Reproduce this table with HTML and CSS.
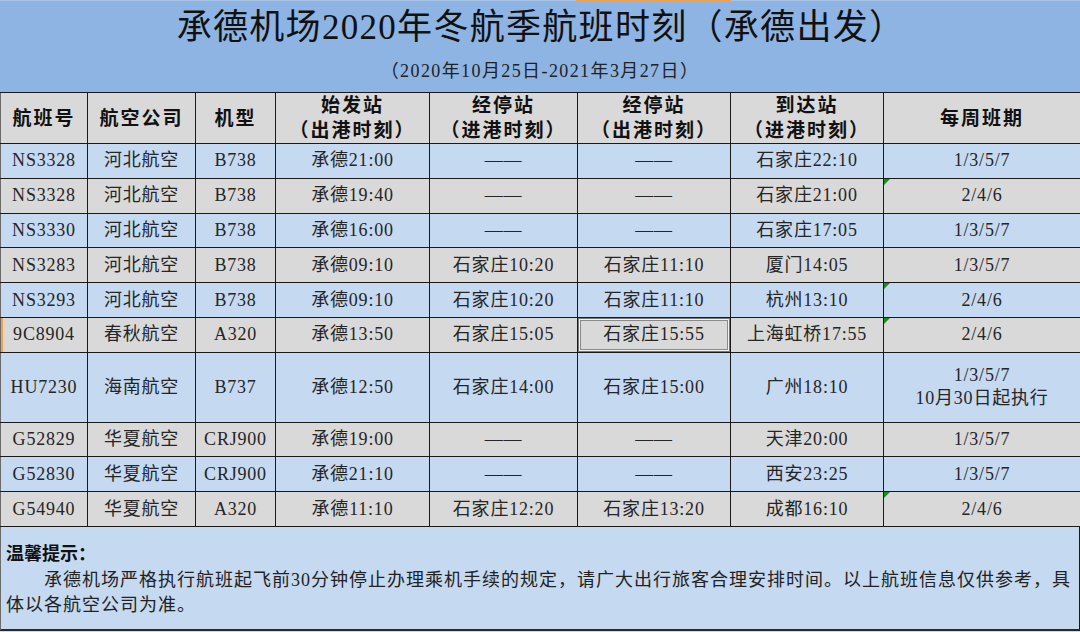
FILE: index.html
```html
<!DOCTYPE html>
<html lang="zh-CN">
<head>
<meta charset="utf-8">
<title>承德机场2020年冬航季航班时刻</title>
<link rel="stylesheet" href="styles.css">
</head>
<body>
<div class="sheet">
  <div class="banner">
    <div class="title">承德机场2020年冬航季航班时刻（承德出发）</div>
    <div class="subtitle">（2020年10月25日-2021年3月27日）</div>
  </div>
  <table class="grid">
    <colgroup>
      <col class="c1"><col class="c2"><col class="c3"><col class="c4"><col class="c5"><col class="c6"><col class="c7"><col class="c8">
    </colgroup>
    <thead>
      <tr class="head">
        <th>航班号</th><th>航空公司</th><th>机型</th>
        <th>始发站<br>（出港时刻）</th>
        <th>经停站<br>（进港时刻）</th>
        <th>经停站<br>（出港时刻）</th>
        <th>到达站<br>（进港时刻）</th>
        <th>每周班期</th>
      </tr>
    </thead>
    <tbody>
      <tr class="blue"><td>NS3328</td><td>河北航空</td><td>B738</td><td>承德21:00</td><td>——</td><td>——</td><td>石家庄22:10</td><td>1/3/5/7</td></tr>
      <tr class="grey"><td>NS3328</td><td>河北航空</td><td>B738</td><td>承德19:40</td><td>——</td><td>——</td><td>石家庄21:00</td><td class="flag">2/4/6</td></tr>
      <tr class="blue"><td>NS3330</td><td>河北航空</td><td>B738</td><td>承德16:00</td><td>——</td><td>——</td><td>石家庄17:05</td><td>1/3/5/7</td></tr>
      <tr class="grey"><td>NS3283</td><td>河北航空</td><td>B738</td><td>承德09:10</td><td>石家庄10:20</td><td>石家庄11:10</td><td>厦门14:05</td><td>1/3/5/7</td></tr>
      <tr class="blue"><td>NS3293</td><td>河北航空</td><td>B738</td><td>承德09:10</td><td>石家庄10:20</td><td>石家庄11:10</td><td>杭州13:10</td><td class="flag">2/4/6</td></tr>
      <tr class="grey active"><td class="rowmark">9C8904</td><td>春秋航空</td><td>A320</td><td>承德13:50</td><td>石家庄15:05</td><td class="sel">石家庄15:55</td><td>上海虹桥17:55</td><td class="flag">2/4/6</td></tr>
      <tr class="blue tall"><td>HU7230</td><td>海南航空</td><td>B737</td><td>承德12:50</td><td>石家庄14:00</td><td>石家庄15:00</td><td>广州18:10</td><td>1/3/5/7<br>10月30日起执行</td></tr>
      <tr class="grey"><td>G52829</td><td>华夏航空</td><td>CRJ900</td><td>承德19:00</td><td>——</td><td>——</td><td>天津20:00</td><td>1/3/5/7</td></tr>
      <tr class="blue"><td>G52830</td><td>华夏航空</td><td>CRJ900</td><td>承德21:10</td><td>——</td><td>——</td><td>西安23:25</td><td>1/3/5/7</td></tr>
      <tr class="grey"><td>G54940</td><td>华夏航空</td><td>A320</td><td>承德11:10</td><td>石家庄12:20</td><td>石家庄13:20</td><td>成都16:10</td><td class="flag">2/4/6</td></tr>
    </tbody>
  </table>
  <div class="note">
    <div class="note-title">温馨提示：</div>
    <p class="note-text"><span class="line indent">承德机场严格执行航班起飞前30分钟停止办理乘机手续的规定，请广大出行旅客合理安排时间。以上航班信息仅供参考，具</span><span class="line">体以各航空公司为准。</span></p>
  </div>
</div>
</body>
</html>
```

FILE: styles.css
```css
html, body {
  margin: 0;
  padding: 0;
  background: #c5d9f1;
}

body {
  width: 1080px;
  height: 632px;
  overflow: hidden;
  font-family: "Liberation Serif", "Noto Sans CJK SC", serif;
  color: #1e1e1e;
}

.sheet {
  width: 1080px;
  height: 632px;
  display: flex;
  flex-direction: column;
}

.banner {
  position: relative;
  height: 92px;
  background: #8db4e2;
  display: flex;
  flex-direction: column;
  align-items: center;
  box-sizing: border-box;
  padding-top: 7px;
  border-top: 1px solid #a9c4e6;
}

.banner::before {
  content: "";
  position: absolute;
  left: 576px;
  top: -1px;
  width: 155px;
  height: 2px;
  background: #f4a046;
}

.title {
  font-family: "Liberation Serif", "Noto Sans CJK SC", serif;
  font-size: 35px;
  line-height: 40px;
  letter-spacing: 1.3px;
  color: #111;
  margin-left: 2px;
}

.subtitle {
  margin-top: 13px;
  font-size: 18px;
  line-height: 20px;
  letter-spacing: 1.4px;
  color: #222;
}

.grid {
  width: 1080px;
  border-collapse: collapse;
  table-layout: fixed;
}

.c1 { width: 87px; }
.c2 { width: 108px; }
.c3 { width: 80px; }
.c4 { width: 154px; }
.c5 { width: 148px; }
.c6 { width: 153px; }
.c7 { width: 153px; }
.c8 { width: 197px; }

.grid th,
.grid td {
  border: 1px solid #1a1a1a;
  padding: 0;
  text-align: center;
  vertical-align: middle;
  white-space: nowrap;
}

.grid th:first-child,
.grid td:first-child {
  border-left-color: #6b6b6b;
}

.head {
  height: 51px;
  background: #d9d9d9;
}

.head th {
  font-size: 19px;
  line-height: 25px;
  font-weight: bold;
  color: #111;
  letter-spacing: 2px;
}

.grid tbody tr {
  height: 34.8px;
}

.grid tbody tr.tall {
  height: 69.8px;
}

.grid td {
  font-size: 18px;
  line-height: 23px;
  letter-spacing: 0.8px;
  color: #252525;
}

.blue { background: #c5d9f1; }
.grey { background: #d9d9d9; }

.flag {
  position: relative;
}

.flag::before {
  content: "";
  position: absolute;
  left: 0;
  top: 0;
  width: 0;
  height: 0;
  border-top: 6px solid #1f8a1f;
  border-right: 6px solid transparent;
}

.rowmark {
  box-shadow: inset 2px 0 0 #f4a046;
}

.sel {
  box-shadow: inset 0 0 0 1px #777, inset 0 0 0 2px #f2f2f2, inset 0 0 0 3px #8a8a8a;
}

.note {
  flex: 1;
  background: #c5d9f1;
  border-left: 1px solid #6b6b6b;
  border-right: 1px solid #1a1a1a;
  border-bottom: 2px solid #2a2a2a;
  margin-bottom: 1px;
  padding: 16px 0 0 5px;
  box-sizing: border-box;
}

.note-title {
  font-size: 18px;
  line-height: 22px;
  font-weight: bold;
  color: #111;
}

.note-text {
  margin: 3px 0 0 0;
  font-size: 18px;
  line-height: 25px;
  letter-spacing: 1px;
  color: #222;
}

.line {
  display: block;
  white-space: nowrap;
}

.indent {
  padding-left: 38px;
}
```
